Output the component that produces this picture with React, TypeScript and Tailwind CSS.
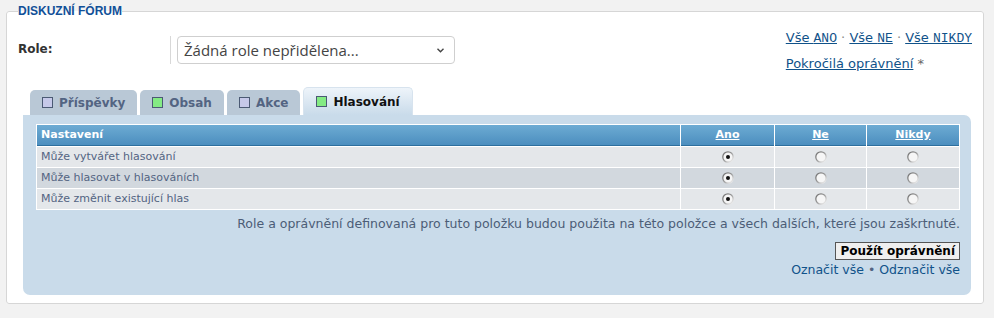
import React from "react";

const Radio = ({ checked }: { checked?: boolean }) => (
  <svg width="12" height="12" viewBox="0 0 12 12" className="inline-block">
    <defs>
      <linearGradient id="rb" x1="0" y1="0" x2="1" y2="1">
        <stop offset="0" stopColor="#6b6b6b" />
        <stop offset="0.5" stopColor="#9a9a9a" />
        <stop offset="1" stopColor="#ffffff" />
      </linearGradient>
    </defs>
    <circle cx="6" cy="6" r="5.2" fill="#f6f6f6" stroke="url(#rb)" strokeWidth="1.3" />
    {checked && <circle cx="6" cy="6" r="2" fill="#111" />}
  </svg>
);

const Tab = ({ label, green, active }: { label: string; green?: boolean; active?: boolean }) => (
  <div
    className={
      active
        ? "flex items-center gap-[6px] h-[28px] px-[12px] rounded-t-[5px] bg-gradient-to-b from-[#eef4fa] to-[#c9dbea] border border-b-0 border-[#d7e3ee] text-[#111]"
        : "flex items-center gap-[6px] h-[25px] px-[12px] rounded-t-[5px] bg-[#b9c8d6] text-[#536482]"
    }
  >
    <span
      className={
        "w-[11px] h-[11px] border border-[#4b5a74] " + (green ? "bg-[#84eb84]" : "bg-[#c6c9e9]")
      }
    />
    <span className="font-bold text-[12px]">{label}</span>
  </div>
);

const rows = ["Může vytvářet hlasování", "Může hlasovat v hlasováních", "Může změnit existující hlas"];

const mono = { fontFamily: "'Liberation Mono', monospace" };

export default function App() {
  return (
    <div className="w-[994px] h-[318px] bg-[#f2f2f2] pt-[4px] px-[6px]" style={{ fontFamily: "'DejaVu Sans', Verdana, sans-serif" }}>
      <fieldset className="w-[978px] h-[300px] bg-white border border-[#d6d6d6] rounded-[3px] px-[11px]">
        <legend
          className="px-0 text-[12px] font-bold text-[#115098] leading-[14px]"
          style={{ fontFamily: "'Liberation Sans', Arial, sans-serif" }}
        >
          DISKUZNÍ FÓRUM
        </legend>

        <div className="flex justify-between items-start pt-[18px]">
          <div className="flex items-start">
            <div className="w-[152px] pt-[4px] font-bold text-[12px] text-[#333]">Role:</div>
            <div className="border-l border-[#d8d8d8] pl-[6px]">
              <div
                className="w-[278px] h-[28px] border border-[#cfcfcf] rounded-[4px] flex items-center justify-between pl-[6px] pr-[10px] text-[15px] text-[#444]"
                style={{ fontFamily: "'Open Sans', sans-serif" }}
              >
                <span>Žádná role nepřidělena...</span>
                <svg width="7" height="5" viewBox="0 0 7 5">
                  <path d="M0.5 0.8 L3.5 3.8 L6.5 0.8" fill="none" stroke="#444" strokeWidth="1.4" />
                </svg>
              </div>
            </div>
          </div>
          <div className="text-[13px] text-[#105289] leading-[16px] mt-[-6px] mb-[-6px]">
            <div>
              <a className="underline">Vše <span style={mono}>ANO</span></a>
              <span className="text-[#888]"> · </span>
              <a className="underline">Vše <span style={mono}>NE</span></a>
              <span className="text-[#888]"> · </span>
              <a className="underline">Vše <span style={mono}>NIKDY</span></a>
            </div>
            <div className="mt-[9px]">
              <a className="underline">Pokročilá oprávnění</a>
              <span className="text-[#666]"> *</span>
            </div>
          </div>
        </div>

        <div className="mt-[21px] ml-[5px]">
          <div className="flex items-end gap-[3px] ml-[7px]">
            <Tab label="Příspěvky" />
            <Tab label="Obsah" green />
            <Tab label="Akce" />
            <Tab label="Hlasování" green active />
          </div>
          <div className="w-[948px] h-[180px] bg-[#c9dbea] rounded-[7px] rounded-tl-none pt-[9px] pl-[13px] pr-[11px]">
            <table className="w-full border-separate border-spacing-[1px] bg-white text-[11px]">
              <thead>
                <tr className="h-[21px] text-white font-bold text-[11px] bg-gradient-to-b from-[#6dabd3] to-[#4a8dbe]">
                  <th className="text-left pl-[4px] border-b border-[#2d6f9e]">Nastavení</th>
                  <th className="w-[93px] border-b border-[#2d6f9e]"><a className="underline">Ano</a></th>
                  <th className="w-[91px] border-b border-[#2d6f9e]"><a className="underline">Ne</a></th>
                  <th className="w-[92px] border-b border-[#2d6f9e]"><a className="underline">Nikdy</a></th>
                </tr>
              </thead>
              <tbody className="text-[#536482]">
                {rows.map((r, i) => (
                  <tr key={r} className={"h-[20px] " + (i === 1 ? "bg-[#d2d8de]" : "bg-[#e4e7ea]")}>
                    <td className="pl-[4px]">{r}</td>
                    <td className="text-center leading-none"><Radio checked /></td>
                    <td className="text-center leading-none"><Radio /></td>
                    <td className="text-center leading-none"><Radio /></td>
                  </tr>
                ))}
              </tbody>
            </table>
            <p className="text-right text-[12.5px] text-[#4c5d77] mt-[5px]">
              Role a oprávnění definovaná pro tuto položku budou použita na této položce a všech dalších, které jsou zaškrtnuté.
            </p>
            <div className="flex flex-col items-end mt-[8px]">
              <button className="h-[18px] px-[4px] bg-[#efefef] border border-[#555] text-[12px] font-bold text-black leading-none">
                Použít oprávnění
              </button>
              <div className="text-[12.5px] text-[#105289] mt-[1px]">
                Označit vše <span className="text-[#536482]">•</span> Odznačit vše
              </div>
            </div>
          </div>
        </div>
      </fieldset>
    </div>
  );
}
